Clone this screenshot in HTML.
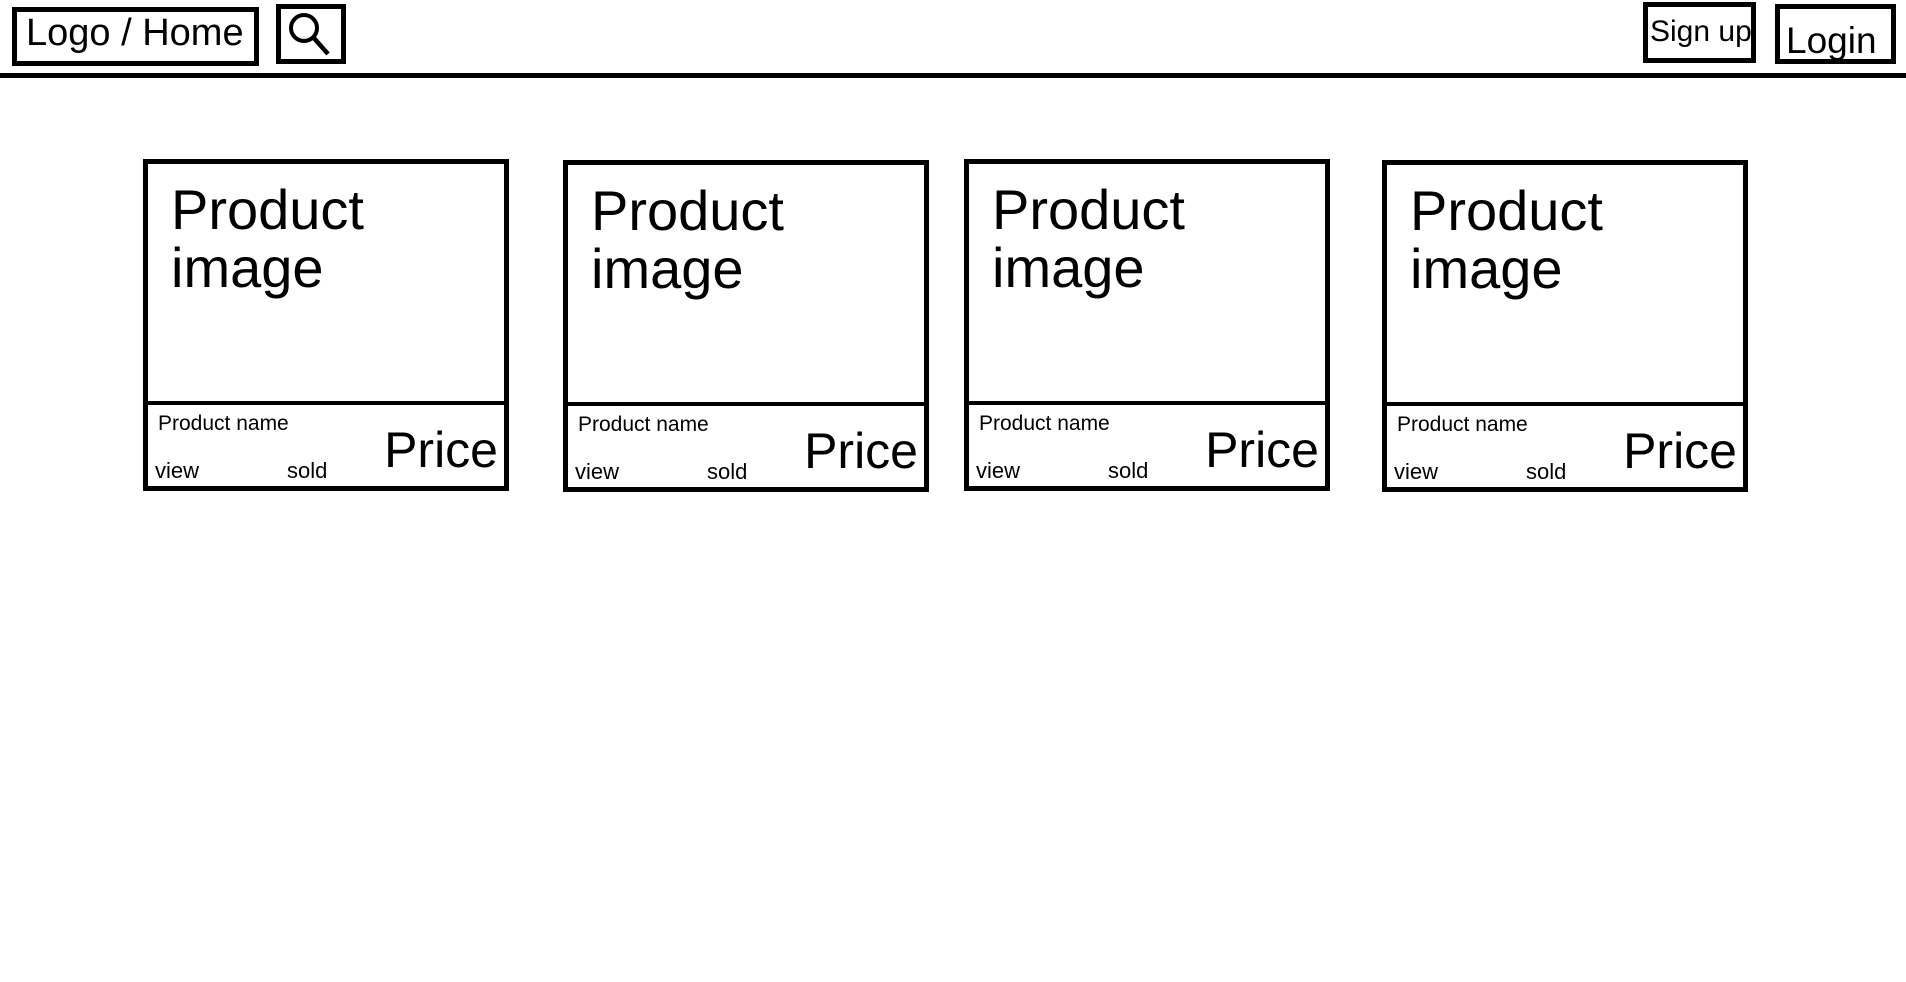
<!DOCTYPE html>
<html><head><meta charset="utf-8"><style>
*{margin:0;padding:0;box-sizing:border-box}
body{width:1906px;height:982px;background:#fff;position:relative;overflow:hidden;font-family:"Liberation Sans",Arial,sans-serif;color:#000}
.b{position:absolute;border:5px solid #000}
.t{position:absolute;white-space:nowrap;line-height:1}
.card{position:absolute;width:366px;height:332px;border:5px solid #000}
.card .div{position:absolute;left:0;right:0;top:237px;height:4px;background:#000}
.card .pi{position:absolute;left:23px;top:17px;font-size:56px;line-height:58px}
.card .pn{position:absolute;left:10px;top:248px;font-size:21px}
.card .v{position:absolute;left:7px;top:294px;font-size:22px}
.card .s{position:absolute;left:139px;top:294px;font-size:22px}
.card .p{position:absolute;right:6px;top:261px;font-size:50px;line-height:1}
</style></head><body>
<div class="b" style="left:12px;top:7px;width:247px;height:59px"></div>
<div class="t" style="left:26px;top:14px;font-size:38px">Logo / Home</div>
<div class="b" style="left:276px;top:4px;width:70px;height:60px"></div>
<svg style="position:absolute;left:276px;top:4px" width="70" height="60"><circle cx="28" cy="24" r="13" fill="none" stroke="#000" stroke-width="4"/><line x1="37" y1="33" x2="52" y2="50" stroke="#000" stroke-width="4.5"/></svg>
<div style="position:absolute;left:0;top:73px;width:1906px;height:5px;background:#000"></div>
<div class="b" style="left:1643px;top:2px;width:113px;height:61px"></div>
<div class="t" style="left:1650px;top:17px;font-size:30px">Sign up</div>
<div class="b" style="left:1775px;top:4px;width:121px;height:60px"></div>
<div class="t" style="left:1786px;top:22px;font-size:37px">Login</div>

<div class="card" style="left:143px;top:159px"><div class="div"></div><div class="pi">Product<br>image</div><div class="pn">Product name</div><div class="v">view</div><div class="s">sold</div><div class="p">Price</div></div>
<div class="card" style="left:563px;top:160px"><div class="div"></div><div class="pi">Product<br>image</div><div class="pn">Product name</div><div class="v">view</div><div class="s">sold</div><div class="p">Price</div></div>
<div class="card" style="left:964px;top:159px"><div class="div"></div><div class="pi">Product<br>image</div><div class="pn">Product name</div><div class="v">view</div><div class="s">sold</div><div class="p">Price</div></div>
<div class="card" style="left:1382px;top:160px"><div class="div"></div><div class="pi">Product<br>image</div><div class="pn">Product name</div><div class="v">view</div><div class="s">sold</div><div class="p">Price</div></div>
</body></html>
